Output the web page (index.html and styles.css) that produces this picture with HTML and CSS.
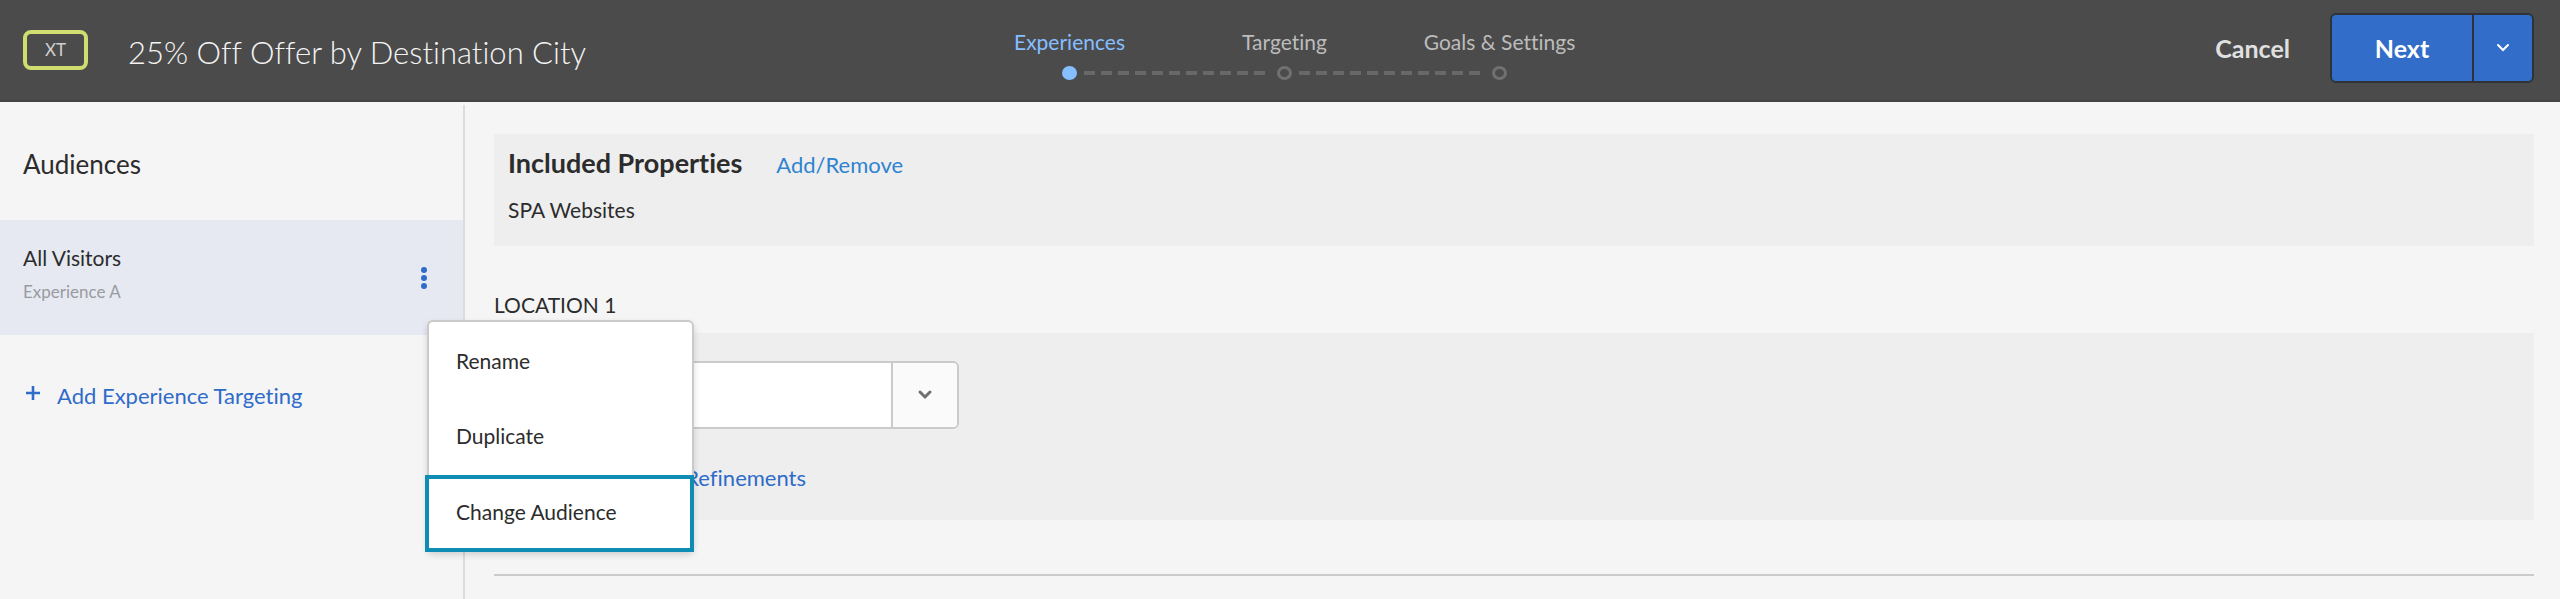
FILE: index.html
```html
<!DOCTYPE html>
<html lang="en">
<head>
<meta charset="utf-8">
<title>25% Off Offer by Destination City</title>
<link rel="stylesheet" href="styles.css">
</head>
<body>
<header class="topbar">
  <div class="identity">
    <span class="badge">XT</span>
    <h1 class="title">25% Off Offer by Destination City</h1>
  </div>
  <nav class="steps" aria-label="Activity steps">
    <ol class="step-labels">
      <li class="step step-current" aria-current="step">Experiences</li>
      <li class="step">Targeting</li>
      <li class="step">Goals &amp; Settings</li>
    </ol>
    <div class="track">
      <span class="dot dot-current"></span>
      <span class="dashes"></span>
      <span class="dot"></span>
      <span class="dashes"></span>
      <span class="dot"></span>
    </div>
  </nav>
  <div class="actions">
    <button class="cancel" type="button">Cancel</button>
    <div class="split">
      <button class="next" type="button">Next</button>
      <button class="next-more" type="button" aria-label="More actions">
        <svg width="14" height="10" viewBox="0 0 14 10"><path d="M2 2l5 5 5-5" fill="none" stroke="#fff" stroke-width="2" stroke-linecap="round"/></svg>
      </button>
    </div>
  </div>
</header>
<div class="body">
  <aside class="sidebar">
    <h2 class="sidebar-title">Audiences</h2>
    <div class="audience">
      <div class="audience-text">
        <span class="audience-name">All Visitors</span>
        <span class="audience-exp">Experience A</span>
      </div>
      <button class="kebab" type="button" aria-label="Audience options">
        <svg width="8" height="24" viewBox="0 0 8 24" fill="#2f6bc9"><circle cx="4" cy="4" r="3"/><circle cx="4" cy="12" r="3"/><circle cx="4" cy="20" r="3"/></svg>
      </button>
      <div class="menu">
        <button class="menu-item" type="button">Rename</button>
        <button class="menu-item" type="button">Duplicate</button>
        <button class="menu-item menu-item-active" type="button">Change Audience</button>
      </div>
    </div>
    <button class="add" type="button">
      <svg width="14" height="14" viewBox="0 0 14 14"><path d="M7 0v14M0 7h14" stroke="#2f6bc9" stroke-width="2.6"/></svg>
      <span>Add Experience Targeting</span>
    </button>
  </aside>
  <main class="main">
    <section class="panel properties">
      <div class="properties-head">
        <h2 class="properties-title">Included Properties</h2>
        <a class="properties-link" href="#">Add/Remove</a>
      </div>
      <p class="properties-value">SPA Websites</p>
    </section>
    <h3 class="location">LOCATION 1</h3>
    <section class="panel place">
      <div class="combo">
        <input class="combo-input" type="text" aria-label="Location 1">
        <button class="combo-button" type="button" aria-label="Show locations">
          <svg width="16" height="12" viewBox="0 0 16 12"><path d="M3 3l5 5 5-5" fill="none" stroke="#6e6e6e" stroke-width="3" stroke-linecap="round"/></svg>
        </button>
      </div>
      <div class="refine"><a class="refine-link" href="#">Refinements</a></div>
    </section>
    <hr class="divider">
  </main>
</div>
</body>
</html>
```
FILE: styles.css
```css
* { box-sizing: border-box; }
body {
  margin: 0;
  min-height: 100vh;
  display: flex;
  flex-direction: column;
  background: #f5f5f5;
  color: #2c2c2c;
  font: 22px/28px Lato, "Open Sans", sans-serif;
  font-variant-ligatures: none;
}
h1, h2, h3, p, ol { margin: 0; padding: 0; font-weight: 400; }
button { font: inherit; font-variant-ligatures: none; color: inherit; margin: 0; padding: 0; border: 0; background: none; text-align: left; }
a { text-decoration: none; }
svg { display: block; }

.topbar {
  display: grid;
  grid-template-columns: 1fr auto 1fr;
  align-items: start;
  height: 102px;
  padding: 0 26px 0 23px;
  background: #4b4b4b;
  border-bottom: 2px solid #434343;
}
.identity { display: flex; align-items: center; height: 100px; }
.badge {
  width: 65px;
  height: 40px;
  border: 4px solid #d0de70;
  border-radius: 8px;
  color: #d0d0d0;
  font-size: 17px;
  line-height: 32px;
  text-align: center;
}
.title { margin-left: 40px; padding-top: 4px; color: #f4f4f4; font-size: 31px; line-height: 44px; font-weight: 300; }

.steps { width: 645px; margin-left: 12px; padding-top: 28px; }
.step-labels { display: grid; grid-template-columns: repeat(3, 1fr); list-style: none; }
.step { text-align: center; color: #bcbcbc; font-size: 21px; white-space: nowrap; }
.step-current { color: #86bfff; }
.track { display: flex; align-items: center; padding: 10px 100px 0; }
.dot { width: 15px; height: 14px; border: 3px solid #707070; border-radius: 50%; }
.dot-current { background: #86bfff; border-color: #86bfff; }
.dashes {
  flex: 1;
  height: 4px;
  margin: 0 7px;
  background: repeating-linear-gradient(90deg, #686868 0 11px, transparent 11px 17px);
}

.actions { display: flex; justify-content: flex-end; align-items: center; height: 96px; gap: 40px; }
.cancel { color: #e0e0e0; font-size: 25px; font-weight: 700; }
.split { display: flex; width: 204px; height: 70px; border: 2px solid #2f3338; border-radius: 6px; background: #326ec9; overflow: hidden; }
.next { flex: 1; color: #fff; font-size: 25px; font-weight: 700; text-align: center; border-right: 2px solid #2f3338; }
.next-more { width: 58px; display: flex; align-items: center; justify-content: center; }

.body { flex: 1; display: flex; padding-top: 3px; }
.sidebar { width: 465px; flex: none; border-right: 2px solid #dcdcdc; }
.sidebar-title { padding: 42px 23px 39px; font-size: 26px; line-height: 34px; }
.audience { position: relative; display: flex; justify-content: space-between; align-items: flex-start; height: 115px; padding: 24px 35px 0 23px; background: #e6e9f2; }
.audience-text { display: flex; flex-direction: column; gap: 8px; }
.audience-name { font-size: 21px; }
.audience-exp { color: #9a9b9f; font-size: 17px; line-height: 24px; }
.kebab { margin-top: 22px; }
.menu {
  position: absolute;
  z-index: 2;
  top: 100px;
  left: 427px;
  width: 267px;
  border: 2px solid #cacaca;
  border-radius: 6px;
  background: #fff;
  box-shadow: 0 3px 6px rgba(0, 0, 0, 0.15);
  display: flex;
  flex-direction: column;
  padding-top: 3px;
}
.menu-item { height: 75px; padding: 0 27px 4px; font-size: 21px; }
.menu-item-active { height: 77px; margin: 0 -2px -2px -4px; border: 4px solid #0d8db3; }
.add { display: flex; gap: 17px; margin: 47px 0 0 26px; color: #2f6bc9; }
.add svg { margin-top: 4px; }

.main { flex: 1; padding: 29px 26px 0 29px; }
.panel { background: #eeeeee; }
.properties { height: 112px; padding: 12px 14px 0; }
.properties-head { display: flex; align-items: baseline; gap: 34px; }
.properties-title { font-size: 27px; line-height: 34px; font-weight: 700; }
.properties-link { color: #2f83d0; }
.properties-value { margin-top: 16px; font-size: 21px; }
.location { margin: 45px 0 14px; font-size: 21px; }
.place { height: 187px; padding: 28px 14px 0; }
.combo { display: flex; width: 451px; height: 68px; border: 2px solid #cacaca; border-radius: 6px; background: #fff; overflow: hidden; }
.combo-input { flex: 1; min-width: 0; padding: 0 16px; border: 0; outline: 0; background: #fff; font: inherit; }
.combo-button { width: 66px; display: flex; align-items: center; justify-content: center; background: #fafafa; border-left: 2px solid #cacaca; }
.refine { width: 298px; margin-top: 35px; text-align: right; }
.refine-link { color: #2f6bc9; }
.divider { height: 2px; margin: 54px 0 0; border: 0; background: #cbcbcb; }
```
